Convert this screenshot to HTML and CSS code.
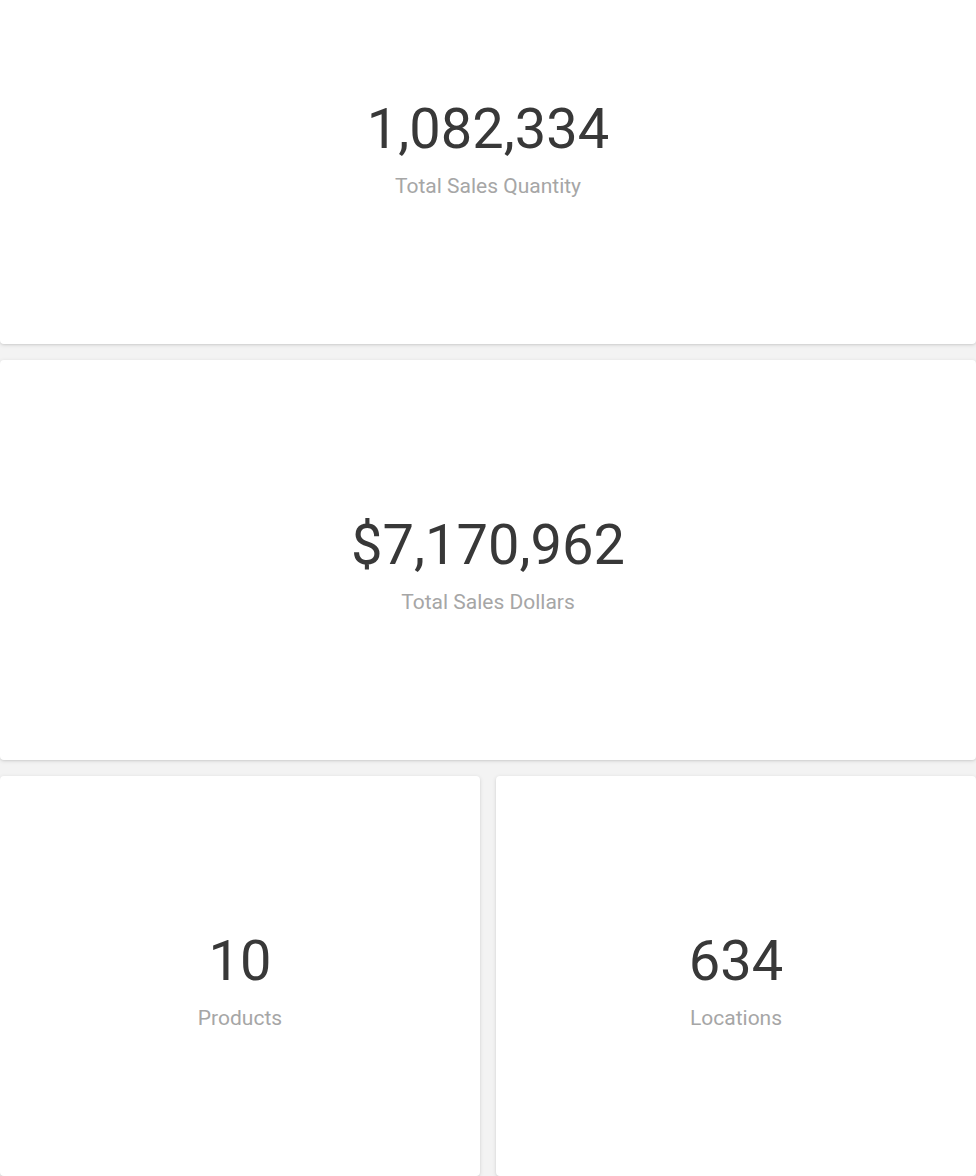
FILE: index.html
```html
<!DOCTYPE html>
<html lang="en">
<head>
    <meta charset="UTF-8">
    <meta name="viewport" content="width=device-width, initial-scale=1.0">
    <title>Sales Summary</title>
    <link rel="stylesheet" href="styles.css">
</head>
<body>

    <div class="dashboard">
        <div class="card">
            <div class="stat-value">1,082,334</div>
            <div class="stat-label">Total Sales Quantity</div>
        </div>

        <div class="card">
            <div class="stat-value">$7,170,962</div>
            <div class="stat-label">Total Sales Dollars</div>
        </div>

        <div class="card-row">
            <div class="card">
                <div class="stat-value">10</div>
                <div class="stat-label">Products</div>
            </div>
            <div class="card">
                <div class="stat-value">634</div>
                <div class="stat-label">Locations</div>
            </div>
        </div>
    </div>

</body>
</html>
```

FILE: styles.css
```css
body {
    font-family: Roboto, "Noto Sans", Arial, sans-serif;
    background-color: #f3f3f3;
    margin: 0;
}
.dashboard {
    display: flex;
    flex-direction: column;
    gap: 16px;
    margin-top: -56px; /* page is scrolled a little */
}
.card-row {
    display: grid;
    grid-template-columns: 1fr 1fr;
    gap: 16px;
}
.card {
    background-color: #fff;
    border-radius: 4px;
    box-shadow: 0 1px 4px rgba(0, 0, 0, 0.12), 0 1px 2px rgba(0, 0, 0, 0.06);
    box-sizing: border-box;
    height: 400px;
    padding-top: 8px;
    display: flex;
    flex-direction: column;
    justify-content: center;
    align-items: center;
    text-align: center;
}
.stat-value {
    font-size: 56px;
    line-height: 64px;
    color: #383838;
}
.stat-label {
    font-size: 21px;
    line-height: 28px;
    margin-top: 11px;
    color: #a6a6a6;
}
```
